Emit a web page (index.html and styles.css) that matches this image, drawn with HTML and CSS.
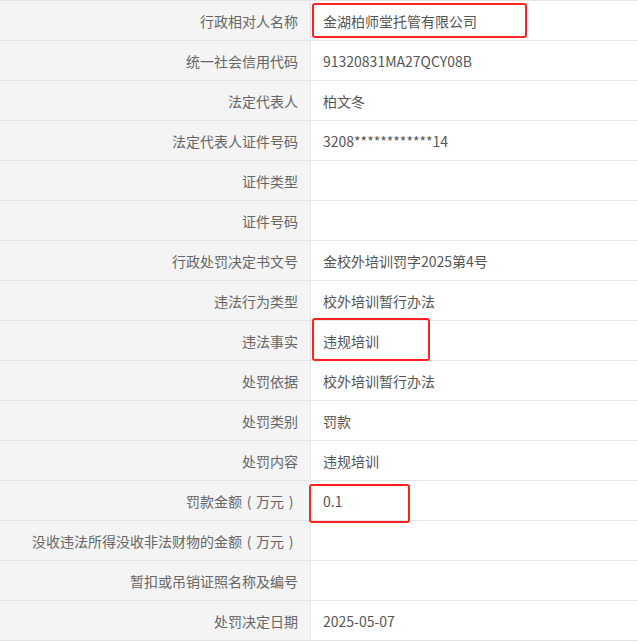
FILE: index.html
```html
<!DOCTYPE html>
<html lang="zh-CN">
<head>
    <meta charset="UTF-8">
    <title>行政处罚信息</title>
    <link rel="stylesheet" href="styles.css">
</head>
<body>
    <table class="detail-table">
        <tr>
            <td class="label">行政相对人名称</td>
            <td class="value">金湖柏师堂托管有限公司<span class="mark mark-name"></span></td>
        </tr>
        <tr>
            <td class="label">统一社会信用代码</td>
            <td class="value">91320831MA27QCY08B</td>
        </tr>
        <tr>
            <td class="label">法定代表人</td>
            <td class="value">柏文冬</td>
        </tr>
        <tr>
            <td class="label">法定代表人证件号码</td>
            <td class="value">3208************14</td>
        </tr>
        <tr>
            <td class="label">证件类型</td>
            <td class="value"></td>
        </tr>
        <tr>
            <td class="label">证件号码</td>
            <td class="value"></td>
        </tr>
        <tr>
            <td class="label">行政处罚决定书文号</td>
            <td class="value">金校外培训罚字2025第4号</td>
        </tr>
        <tr>
            <td class="label">违法行为类型</td>
            <td class="value">校外培训暂行办法</td>
        </tr>
        <tr>
            <td class="label">违法事实</td>
            <td class="value">违规培训<span class="mark mark-fact"></span></td>
        </tr>
        <tr>
            <td class="label">处罚依据</td>
            <td class="value">校外培训暂行办法</td>
        </tr>
        <tr>
            <td class="label">处罚类别</td>
            <td class="value">罚款</td>
        </tr>
        <tr>
            <td class="label">处罚内容</td>
            <td class="value">违规培训</td>
        </tr>
        <tr>
            <td class="label">罚款金额<span class="paren">(</span>万元<span class="paren">)</span></td>
            <td class="value">0.1<span class="mark mark-amount"></span></td>
        </tr>
        <tr>
            <td class="label">没收违法所得没收非法财物的金额<span class="paren">(</span>万元<span class="paren">)</span></td>
            <td class="value"></td>
        </tr>
        <tr>
            <td class="label">暂扣或吊销证照名称及编号</td>
            <td class="value"></td>
        </tr>
        <tr>
            <td class="label">处罚决定日期</td>
            <td class="value">2025-05-07</td>
        </tr>
    </table>
</body>
</html>
```

FILE: styles.css
```css
body {
    margin: 0;
    background: #ffffff;
    font-family: "Microsoft YaHei", "Noto Sans CJK SC", "Noto Sans", sans-serif;
    font-size: 14px;
    color: #555;
}

.detail-table {
    border-collapse: collapse;
    width: 100%;
    table-layout: fixed;
}

.detail-table td {
    height: 39px;
    padding: 0 12px;
    border-top: 1px solid #e4e4e4;
    border-bottom: 1px solid #e4e4e4;
    white-space: nowrap;
}

.label {
    width: 286px;
    background: #f4f4f4;
    color: #666;
    text-align: right;
    border-right: 1px solid #e4e4e4;
}

/* full-width brackets, glyph centred in its cell */
.paren {
    display: inline-block;
    width: 1em;
    text-align: center;
}

.value {
    position: relative;
    color: #555;
}

/* red annotation boxes drawn over the values */
.mark {
    position: absolute;
    border: 2.5px solid #ff2222;
    border-radius: 3px;
    box-sizing: border-box;
}

.mark-name {
    left: 1px;
    top: 2px;
    width: 215px;
    height: 35px;
}

.mark-fact {
    left: 1px;
    top: -3px;
    width: 118px;
    height: 43px;
}

.mark-amount {
    left: -2px;
    top: 3px;
    width: 101px;
    height: 39px;
}
```
